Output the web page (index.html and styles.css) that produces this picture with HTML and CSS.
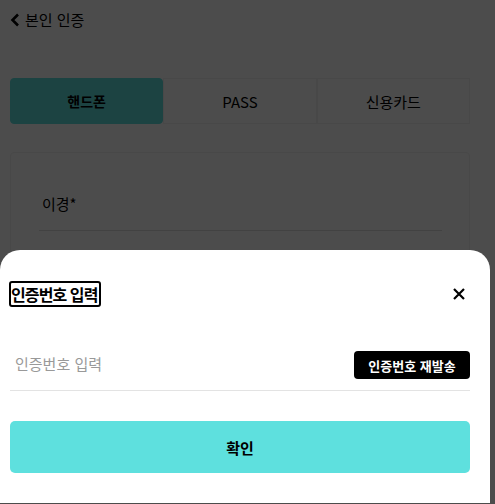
FILE: index.html
```html
<!DOCTYPE html>
<html lang="ko">
<head>
    <meta charset="UTF-8">
    <meta name="viewport" content="width=device-width, initial-scale=1.0">
    <title>본인 인증</title>
    <link rel="stylesheet" href="styles.css">
</head>
<body>
    <div class="page">
        <div class="header">
            <svg class="back" width="10" height="16" viewBox="0 0 10 16"><path d="M8 2.5 L2.5 8 L8 13.5" fill="none" stroke="#000" stroke-width="2.6"/></svg>
            <span>본인 인증</span>
        </div>

        <div class="tabs">
            <div class="tab active">핸드폰</div>
            <div class="tab">PASS</div>
            <div class="tab">신용카드</div>
        </div>

        <div class="card">
            <div class="field">이경*</div>
        </div>
    </div>

    <div class="overlay"></div>

    <div class="sheet">
        <div class="sheet-head">
            <h2 class="sheet-title">인증번호 입력</h2>
            <svg class="close" width="14" height="14" viewBox="0 0 14 14"><path d="M2 2 L12 12 M12 2 L2 12" stroke="#000" stroke-width="2.2"/></svg>
        </div>
        <div class="code-row">
            <input type="text" class="code-input" placeholder="인증번호 입력">
            <button type="button" class="resend">인증번호 재발송</button>
        </div>
        <button type="button" class="confirm">확인</button>
    </div>
</body>
</html>
```

FILE: styles.css
```css
body {
    margin: 0;
    background: #fff;
    font-family: "Noto Sans CJK KR", "Noto Sans", sans-serif;
    color: #000;
    height: 504px;
    overflow: hidden;
}
.page {
    padding: 0 25px 0 10px;
}
.header {
    display: flex;
    align-items: center;
    gap: 5px;
    height: 38px;
    font-size: 15px;
}
.back {
    margin-top: 1px;
}
.tabs {
    display: flex;
    margin-top: 40px;
    height: 46px;
}
.tab {
    flex: 1;
    display: flex;
    align-items: center;
    justify-content: center;
    font-size: 15px;
    border: 1px solid #f2f2f2;
}
.tab.active {
    background: #5ee0de;
    border-color: #5ee0de;
    border-radius: 4px;
    font-weight: bold;
    font-size: 14px;
}
.card {
    margin-top: 28px;
    border: 1px solid #f0f0f0;
    border-radius: 4px;
    padding: 40px 27px 0 28px;
    height: 200px;
}
.field {
    font-size: 15px;
    padding: 0 3px 16px;
    border-bottom: 1px solid #ddd;
}
.overlay {
    position: fixed;
    inset: 0;
    background: rgba(0, 0, 0, 0.7);
}
.sheet {
    position: fixed;
    left: 0;
    bottom: 1px;
    width: 490px;
    height: 253px;
    background: #fff;
    border-radius: 20px 20px 0 0;
    box-sizing: border-box;
    padding: 32px 20px 0 10px;
}
.sheet-head {
    display: flex;
    align-items: center;
    justify-content: space-between;
    height: 24px;
}
.sheet-title {
    margin: 0;
    margin-left: -1px;
    font-size: 16px;
    font-weight: bold;
    line-height: 22px;
    border: 2px solid #000;
    border-radius: 3px;
    padding: 0 1px 0 0;
    letter-spacing: -0.9px;
}
.close {
    margin-right: 4px;
}
.code-row {
    display: flex;
    align-items: center;
    justify-content: space-between;
    margin-top: 45px;
    padding-bottom: 11px;
    border-bottom: 1px solid #e3e3e3;
}
.code-input {
    border: none;
    outline: none;
    font-family: inherit;
    font-size: 15px;
    padding: 0 0 4px 5px;
    width: 200px;
}
.code-input::placeholder {
    color: #999;
}
.resend {
    background: #000;
    color: #fff;
    border: none;
    border-radius: 4px;
    font-family: inherit;
    font-size: 13px;
    font-weight: bold;
    height: 28px;
    width: 116px;
    padding: 0;
}
.confirm {
    display: block;
    width: 100%;
    height: 52px;
    margin-top: 30px;
    background: #5ee0de;
    border: none;
    border-radius: 5px;
    font-family: inherit;
    font-size: 15px;
    font-weight: bold;
    color: #000;
}
```
